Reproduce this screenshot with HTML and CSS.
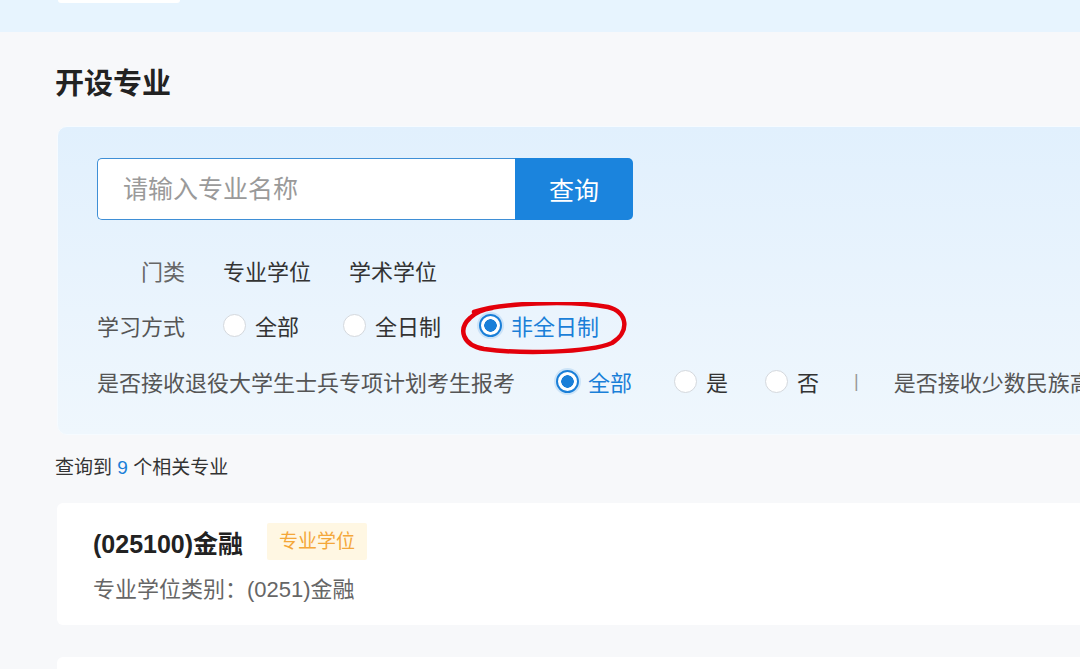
FILE: index.html
```html
<!DOCTYPE html>
<html lang="zh-CN">
<head>
<meta charset="utf-8">
<title>开设专业</title>
<link rel="stylesheet" href="styles.css">
</head>
<body>
<div class="topbar"><div class="topbar-pill"></div></div>
<main class="main">
  <h1 class="title">开设专业</h1>
  <section class="filter-card">
    <div class="search">
      <div class="search-input">请输入专业名称</div>
      <button class="search-btn">查询</button>
    </div>
    <div class="row row-tabs">
      <span class="label label-light">门类</span>
      <span class="tab">专业学位</span>
      <span class="tab">学术学位</span>
    </div>
    <div class="row row-mode">
      <span class="label">学习方式</span>
      <span class="opt"><i class="radio"></i>全部</span>
      <span class="opt"><i class="radio"></i>全日制</span>
      <span class="opt opt-on circled"><i class="radio radio-on"></i>非全日制
        <svg class="circle-mark" width="172" height="54" viewBox="0 0 172 54">
          <path d="M16 10 C42 1 112 -2 150 5 C170 10 172 30 154 41 C130 51 62 52 26 47 C4 43 0 27 12 16 C18 10 26 7 34 6" fill="none" stroke="#e3000b" stroke-width="4.5" stroke-linecap="round"/>
        </svg>
      </span>
    </div>
    <div class="row row-vet">
      <span class="label label-long">是否接收退役大学生士兵专项计划考生报考</span>
      <span class="opt opt-on"><i class="radio radio-on"></i>全部</span>
      <span class="opt"><i class="radio"></i>是</span>
      <span class="opt"><i class="radio"></i>否</span>
      <span class="sep">|</span>
      <span class="label label-long">是否接收少数民族高层次骨干人才计划考生报考</span>
    </div>
  </section>
  <p class="count">查询到 <em>9</em> 个相关专业</p>
  <article class="result">
    <div class="result-head">
      <span class="result-name">(025100)金融</span>
      <span class="tag">专业学位</span>
    </div>
    <div class="result-sub">专业学位类别：(0251)金融</div>
  </article>
  <article class="result result-next"></article>
</main>
</body>
</html>
```
FILE: styles.css
```css
html, body {
  margin: 0;
  padding: 0;
}
body {
  width: 1080px;
  height: 669px;
  overflow: hidden;
  background: #f7f8fa;
  font-family: "Liberation Sans", "Noto Sans CJK SC", sans-serif;
  color: #333;
}
.topbar {
  height: 32px;
  background: #e7f4fe;
}
.topbar-pill {
  margin-left: 58px;
  width: 122px;
  height: 3px;
  background: #fff;
  border-radius: 0 0 8px 8px;
}
.main {
  padding-left: 57px;
  width: 1200px;
}
.title {
  margin: 35px 0 0 -2px;
  font-size: 29px;
  line-height: 35px;
  font-weight: bold;
  color: #222;
}
.filter-card {
  margin-top: 24px;
  box-sizing: border-box;
  width: 1140px;
  height: 309px;
  padding: 31px 0 0 39px;
  border: 1px solid #f6fbff;
  border-radius: 10px;
  background: linear-gradient(180deg, #e1f0fd 0%, #eaf4fd 60%, #eff7fd 100%);
}
.search {
  display: flex;
  width: 536px;
  height: 62px;
}
.search-input {
  box-sizing: border-box;
  width: 418px;
  height: 62px;
  border: 1px solid #3f8fd6;
  border-right: none;
  border-radius: 5px 0 0 5px;
  background: #fff;
  padding-left: 25px;
  font-size: 25px;
  line-height: 60px;
  color: #9a9a9a;
}
.search-btn {
  width: 118px;
  height: 62px;
  border: none;
  border-radius: 0 5px 5px 0;
  background: #1b84dd;
  color: #fff;
  font-family: inherit;
  font-size: 25px;
  padding: 0;
}
.row {
  display: flex;
  align-items: center;
  height: 36px;
  font-size: 22px;
  white-space: nowrap;
}
.row > * { flex: none; }
.row-tabs { margin-top: 32px; }
.row-mode { margin-top: 19px; }
.row-vet { margin-top: 20px; }
.label {
  width: 88px;
  text-align: right;
  color: #555;
  margin-right: 38px;
  white-space: nowrap;
}
.label-light { color: #666; }
.label-long {
  width: auto;
  text-align: left;
  margin-right: 41px;
}
.tab {
  margin-right: 38px;
  color: #333;
}
.opt {
  display: flex;
  align-items: center;
  margin-right: 44px;
  color: #333;
  position: relative;
}
.opt-on { color: #1a7fd8; }
.radio {
  box-sizing: border-box;
  width: 23px;
  height: 23px;
  border: 1px solid #d4d8dd;
  border-radius: 50%;
  background: #fff;
  margin-right: 9px;
  flex: none;
}
.radio-on {
  border: 2px solid #1a7fd8;
  background: radial-gradient(circle, #1a7fd8 0 6px, #fff 6.5px);
  box-shadow: 0 0 0 2px rgba(26, 127, 216, 0.15);
}
.row-mode .opt:nth-child(3) { margin-right: 38px; }
.row-vet .opt:nth-child(2) { margin-right: 42px; }
.row-vet .opt:nth-child(3) { margin-right: 37px; }
.row-vet .opt:nth-child(4) { margin-right: 35px; }
.sep {
  color: #999;
  font-size: 18px;
  margin-right: 35px;
}
.circle-mark {
  position: absolute;
  left: -21px;
  top: -7px;
  pointer-events: none;
}
.count {
  margin: 21px 0 0 -2px;
  font-size: 19px;
  line-height: 24px;
  color: #333;
}
.count em {
  font-style: normal;
  color: #1a7fd8;
}
.result {
  margin-top: 23px;
  box-sizing: border-box;
  width: 1140px;
  height: 122px;
  padding: 20px 0 0 36px;
  background: #fff;
  border-radius: 6px;
}
.result-head {
  display: flex;
  align-items: center;
  height: 37px;
}
.result-name {
  font-size: 25px;
  font-weight: bold;
  color: #222;
  margin-right: 24px;
}
.tag {
  box-sizing: border-box;
  height: 37px;
  padding: 0 12px;
  background: #fff7e3;
  color: #f4a73a;
  font-size: 19px;
  line-height: 37px;
  border-radius: 2px;
}
.result-sub {
  margin-top: 15px;
  font-size: 22px;
  line-height: 30px;
  color: #666;
}
.result-next {
  margin-top: 32px;
}
```
